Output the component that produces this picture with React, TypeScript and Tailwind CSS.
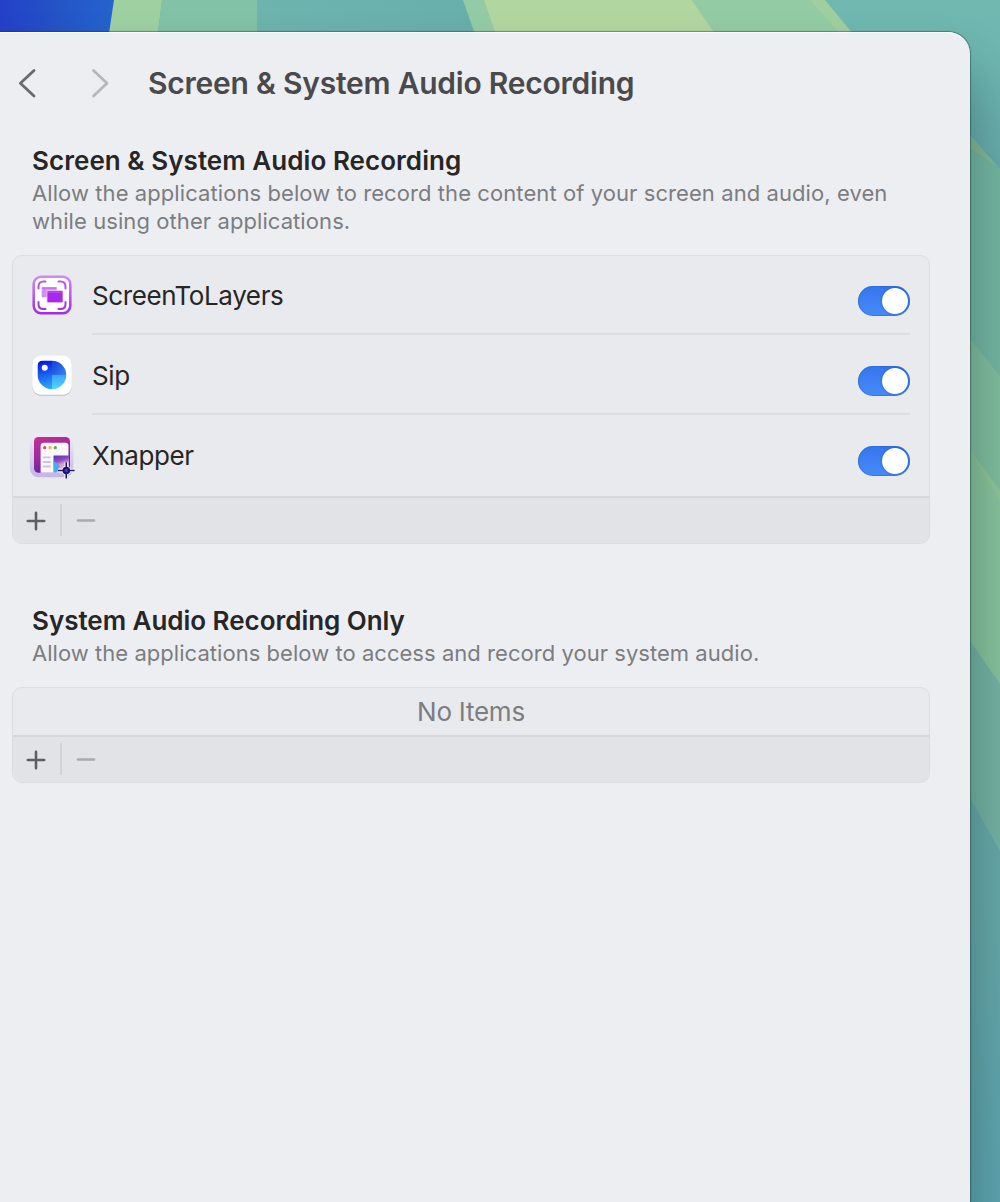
import React from 'react';

function Wallpaper() {
  return (
    <svg className="absolute inset-0" width="1000" height="1202" viewBox="0 0 1000 1202" aria-hidden="true">
      <defs>
        <linearGradient id="blue" x1="0" x2="1" y1="0" y2="0">
          <stop offset="0" stopColor="#2440c8" />
          <stop offset=".5" stopColor="#2455c6" />
          <stop offset="1" stopColor="#2565cf" />
        </linearGradient>
        <linearGradient id="teal" x1="0" x2="1" y1="0" y2="0">
          <stop offset="0" stopColor="#6db3ae" />
          <stop offset="1" stopColor="#68aeab" />
        </linearGradient>
        <linearGradient id="right" gradientUnits="userSpaceOnUse" x1="0" x2="0" y1="0" y2="1202">
          <stop offset="0" stopColor="#70b8b0" />
          <stop offset=".05" stopColor="#6fb6b0" />
          <stop offset=".14" stopColor="#66a7a9" />
          <stop offset=".75" stopColor="#66a6a6" />
          <stop offset="1" stopColor="#5da2ae" />
        </linearGradient>
      </defs>
      <rect width="1000" height="1202" fill="url(#right)" />
      <rect width="120" height="70" fill="url(#blue)" />
      <path d="M114 0H162L157 40H108Z" fill="#9ed0a2" />
      <path d="M162 0H257V40H157Z" fill="#82c2a6" />
      <rect x="257" width="230" height="40" fill="url(#teal)" />
      <path d="M463 0H486L500 40H477Z" fill="#93cba6" />
      <path d="M484 0H692L720 40H498Z" fill="#b2d6a0" />
      <path d="M692 0H812L848 40H719Z" fill="#92cba4" />
      <path d="M810 0H825L858 40H846Z" fill="#a0cf9e" />
      <path d="M960 143L1000 169V400L960 345Z" fill="#74b3a0" />
      <path d="M960 125L970 135L1000 169L970 149L960 143Z" fill="#82b795" />
      <path d="M960 326L970 339L1000 376V684L960 628Z" fill="#80bb9c" />
      <path d="M960 438L970 451L1000 490V684L960 628Z" fill="#86c09a" />
      <path d="M970 451L1000 490V502Z" fill="#8fc295" />
      <path d="M960 628L970 641L1000 684V851L970 798L960 780Z" fill="#74b0a1" />
    </svg>
  );
}

function ScreenToLayersIcon() {
  return (
    <svg width="48" height="48" viewBox="0 0 48 48">
      <defs>
        <linearGradient id="stl" x1="0" x2="0" y1="0" y2="1">
          <stop offset="0" stopColor="#d08af5" />
          <stop offset="1" stopColor="#a42ce6" />
        </linearGradient>
        <linearGradient id="stlA" x1="0" x2="0" y1="0" y2="1">
          <stop offset="0" stopColor="#b45ae3" />
          <stop offset="1" stopColor="#a730e2" />
        </linearGradient>
      </defs>
      <rect x="5.700" y="5.700" width="36.600" height="36.600" rx="7.500" fill="#fff" stroke="url(#stl)" strokeWidth="2.600" />
      <path d="M10.500 17.500V15.500Q10.500 10.500 15.500 10.500H17.500M30.500 10.500H32.500Q37.500 10.500 37.500 15.500V17.500M37.500 31V33Q37.500 38 32.500 38H30.500M17.500 38H15.500Q10.500 38 10.500 33V31" fill="none" stroke="url(#stlA)" strokeWidth="2" strokeLinecap="round" />
      <rect x="13.700" y="16" width="15" height="10.200" rx=".6" fill="#d58df2" />
      <path d="M14 17.200H28.500" stroke="#c468ed" strokeWidth="1" />
      <rect x="18.600" y="19.100" width="16" height="12.500" fill="#e9c6fa" />
      <rect x="19.400" y="20" width="15.200" height="11.300" rx=".6" fill="#ac27ed" />
      <path d="M20 21.200H34" stroke="#c45bf3" strokeWidth="1" />
    </svg>
  );
}

function SipIcon() {
  return (
    <svg width="48" height="48" viewBox="0 0 48 48">
      <defs>
        <linearGradient id="sip1" gradientUnits="userSpaceOnUse" x1="14" x2="20" y1="10" y2="38">
          <stop offset="0" stopColor="#0a16dc" />
          <stop offset=".5" stopColor="#1662f0" />
          <stop offset="1" stopColor="#33a8fa" />
        </linearGradient>
        <linearGradient id="sip2" x1="0" x2="1" y1="0" y2="1">
          <stop offset="0" stopColor="#123ce2" />
          <stop offset="1" stopColor="#3a86ee" />
        </linearGradient>
        <linearGradient id="sip4" x1="0" x2="0" y1="0" y2="1">
          <stop offset="0" stopColor="#3aa4fa" />
          <stop offset="1" stopColor="#52dcff" />
        </linearGradient>
        <clipPath id="sipc">
          <path d="M14.500 9.700H24A14.300 14.300 0 1 1 9.700 24V14.500Q9.700 9.700 14.500 9.700Z" />
        </clipPath>
      </defs>
      <rect x="4.200" y="5.200" width="39.600" height="39.600" rx="9" fill="#000" opacity=".18" />
      <rect x="4.200" y="4.500" width="39.600" height="39.300" rx="9" fill="#fff" />
      <g clipPath="url(#sipc)">
        <rect x="9" y="9" width="15.200" height="30" fill="url(#sip1)" />
        <rect x="24" y="9" width="15" height="15.200" fill="url(#sip2)" />
        <rect x="24" y="24" width="15" height="15" fill="url(#sip4)" />
      </g>
      <circle cx="16.700" cy="16.700" r="3" fill="#fff" />
    </svg>
  );
}

function XnapperIcon() {
  return (
    <svg width="48" height="48" viewBox="0 0 48 48">
      <defs>
        <linearGradient id="xn" x1="0" x2=".4" y1="0" y2="1">
          <stop offset="0" stopColor="#c72f92" />
          <stop offset=".5" stopColor="#a02b9c" />
          <stop offset="1" stopColor="#6120ad" />
        </linearGradient>
        <linearGradient id="xnb" x1="0" x2="0" y1="0" y2="1">
          <stop offset="0" stopColor="#efedf8" />
          <stop offset="1" stopColor="#c5b5e3" />
        </linearGradient>
        <linearGradient id="xnp" x1=".3" x2=".6" y1="0" y2="1">
          <stop offset="0" stopColor="#6a35b4" />
          <stop offset=".3" stopColor="#8b4cc0" />
          <stop offset=".55" stopColor="#e0a0cc" />
          <stop offset="1" stopColor="#efc5d8" />
        </linearGradient>
      </defs>
      <rect x="1.800" y="2.300" width="43.500" height="44" rx="9" fill="url(#xnb)" />
      <rect x="6" y="6" width="36" height="35.800" rx="4.500" fill="url(#xn)" />
      <path d="M12.600 15Q12.600 11.800 15.800 11.800H37.500Q40.500 11.800 40.500 15V41.800H12.600Z" fill="#fbf8fd" />
      <circle cx="16.700" cy="16.700" r="1.600" fill="#e3484e" />
      <circle cx="22" cy="16.700" r="1.600" fill="#eeb43d" />
      <circle cx="27.300" cy="16.700" r="1.600" fill="#4cae50" />
      <path d="M14.800 26.300H22.700M14.800 31H22.700M14.800 35.500H22.700" stroke="#cdc3dc" strokeWidth="1.800" />
      <rect x="25.500" y="24.500" width="15.500" height="17" fill="url(#xnp)" />
      <path d="M25.500 29.500L32 35L28.500 41.500H25.500Z" fill="#45aee6" />
      <path d="M38.300 31.300V47.500M30 39.500H46.600" stroke="#fff" strokeWidth="3.600" opacity=".9" />
      <circle cx="38.300" cy="39.500" r="4.800" fill="#fff" opacity=".7" />
      <path d="M38.300 31.300V47.500M30 39.500H46.600" stroke="#1b126c" strokeWidth="1.600" />
      <circle cx="38.300" cy="39.500" r="3.800" fill="#1b126c" />
      <circle cx="38.300" cy="39.500" r="2" fill="#4a2fa8" />
    </svg>
  );
}

function Toggle() {
  return (
    <span className="mt-2.5 flex h-[30px] w-[52px] justify-end rounded-full bg-linear-to-b from-[#3576ee] to-[#478bf8] p-0.5 shadow-[inset_0_0_1px_1px_rgba(30,90,210,0.45)]">
      <span className="size-[26px] rounded-full bg-white shadow-[0_0_2px_rgba(0,30,100,0.5)]" />
    </span>
  );
}

function AppRow({ name, icon, divider }: { name: string; icon: React.ReactNode; divider?: boolean }) {
  return (
    <div className="flex h-20 pl-[15px] pr-[19px]">
      <div className="mt-[15px] h-12 w-12 shrink-0">{icon}</div>
      <div className={divider ? 'ml-4 flex h-[79px] grow justify-between border-b-2 border-[#dcdde1]' : 'ml-4 flex h-[79px] grow justify-between'}>
        <span className="mt-[24px] h-8 text-[26px] leading-8 tracking-[-0.39px] text-[#262627]">{name}</span>
        <div className="pt-5">
          <Toggle />
        </div>
      </div>
    </div>
  );
}

function Footer() {
  return (
    <div className="flex h-[47px] items-center border-t-2 border-[#d6d7db] bg-[#e2e3e7]">
      <svg width="47" height="45" viewBox="0 0 47 45" fill="none" stroke="#5e5f63" strokeWidth="2.600" strokeLinecap="round">
        <path d="M23 14.800V31.200M14.800 23H31.200" />
      </svg>
      <span className="mb-px h-8 w-0.5 bg-[#d3d4d8]" />
      <svg width="48" height="45" viewBox="0 0 48 45" fill="none" stroke="#a9aaae" strokeWidth="2.600" strokeLinecap="round">
        <path d="M16 22.500H32" />
      </svg>
    </div>
  );
}

function Chevron({ d, color }: { d: string; color: string }) {
  return (
    <svg width="20" height="32" viewBox="0 0 20 32" fill="none" stroke={color} strokeWidth="2.800" strokeLinecap="round" strokeLinejoin="round">
      <path d={d} />
    </svg>
  );
}

export default function App() {
  return (
    <div className="relative h-[1202px] w-[1000px] overflow-hidden font-['Inter',sans-serif]">
      <Wallpaper />
      <div className="relative mt-8 h-[1170px] w-[970px] rounded-tr-[22px] bg-[#edeef2] shadow-[inset_0_2px_1px_-1px_#fff,0_0_1px_1px_rgba(20,60,50,0.45),0_36px_50px_rgba(10,50,50,0.38)]">
        <header className="flex h-[102px] items-center pl-[17px]">
          <Chevron d="M17 3.500L3.400 16.200L17 29" color="#6a6a6c" />
          <span className="w-[54px]" />
          <Chevron d="M2.500 3.500L16 16.200L2.500 29" color="#b6b7ba" />
          <h1 className="ml-[37px] whitespace-nowrap text-[30px] font-semibold tracking-[-0.23px] text-[#4a4a4c]">Screen &amp; System Audio Recording</h1>
        </header>
        <main className="pl-3">
          <div className="h-[121px] pl-5 pt-[10px]">
            <h2 className="h-[34px] text-[26px] font-semibold leading-[34px] tracking-[0.05px] text-[#262627]">Screen &amp; System Audio Recording</h2>
            <p className="whitespace-nowrap pt-px text-[22px] leading-7 tracking-[0.08px] text-[#7c7d80]">
              Allow the applications below to record the content of your screen and audio, even<br />while using other applications.
            </p>
          </div>
          <section className="h-[289px] w-[918px] overflow-hidden rounded-[10px] border border-[#dcdde1] bg-[#e9eaee]">
            <AppRow name="ScreenToLayers" icon={<ScreenToLayersIcon />} divider />
            <AppRow name="Sip" icon={<SipIcon />} divider />
            <AppRow name="Xnapper" icon={<XnapperIcon />} />
            <Footer />
          </section>
          <div className="h-[143px] pl-5 pt-[60px]">
            <h2 className="h-[34px] text-[26px] font-semibold leading-[34px] tracking-[-0.03px] text-[#262627]">System Audio Recording Only</h2>
            <p className="pt-px text-[22px] leading-7 tracking-[0.04px] text-[#7c7d80]">Allow the applications below to access and record your system audio.</p>
          </div>
          <section className="w-[918px] overflow-hidden rounded-[10px] border border-[#dcdde1] bg-[#e9eaee]">
            <div className="h-[47px] text-center text-[26px] leading-[48px] tracking-[-0.25px] text-[#7c7d80]">No Items</div>
            <Footer />
          </section>
        </main>
      </div>
    </div>
  );
}
